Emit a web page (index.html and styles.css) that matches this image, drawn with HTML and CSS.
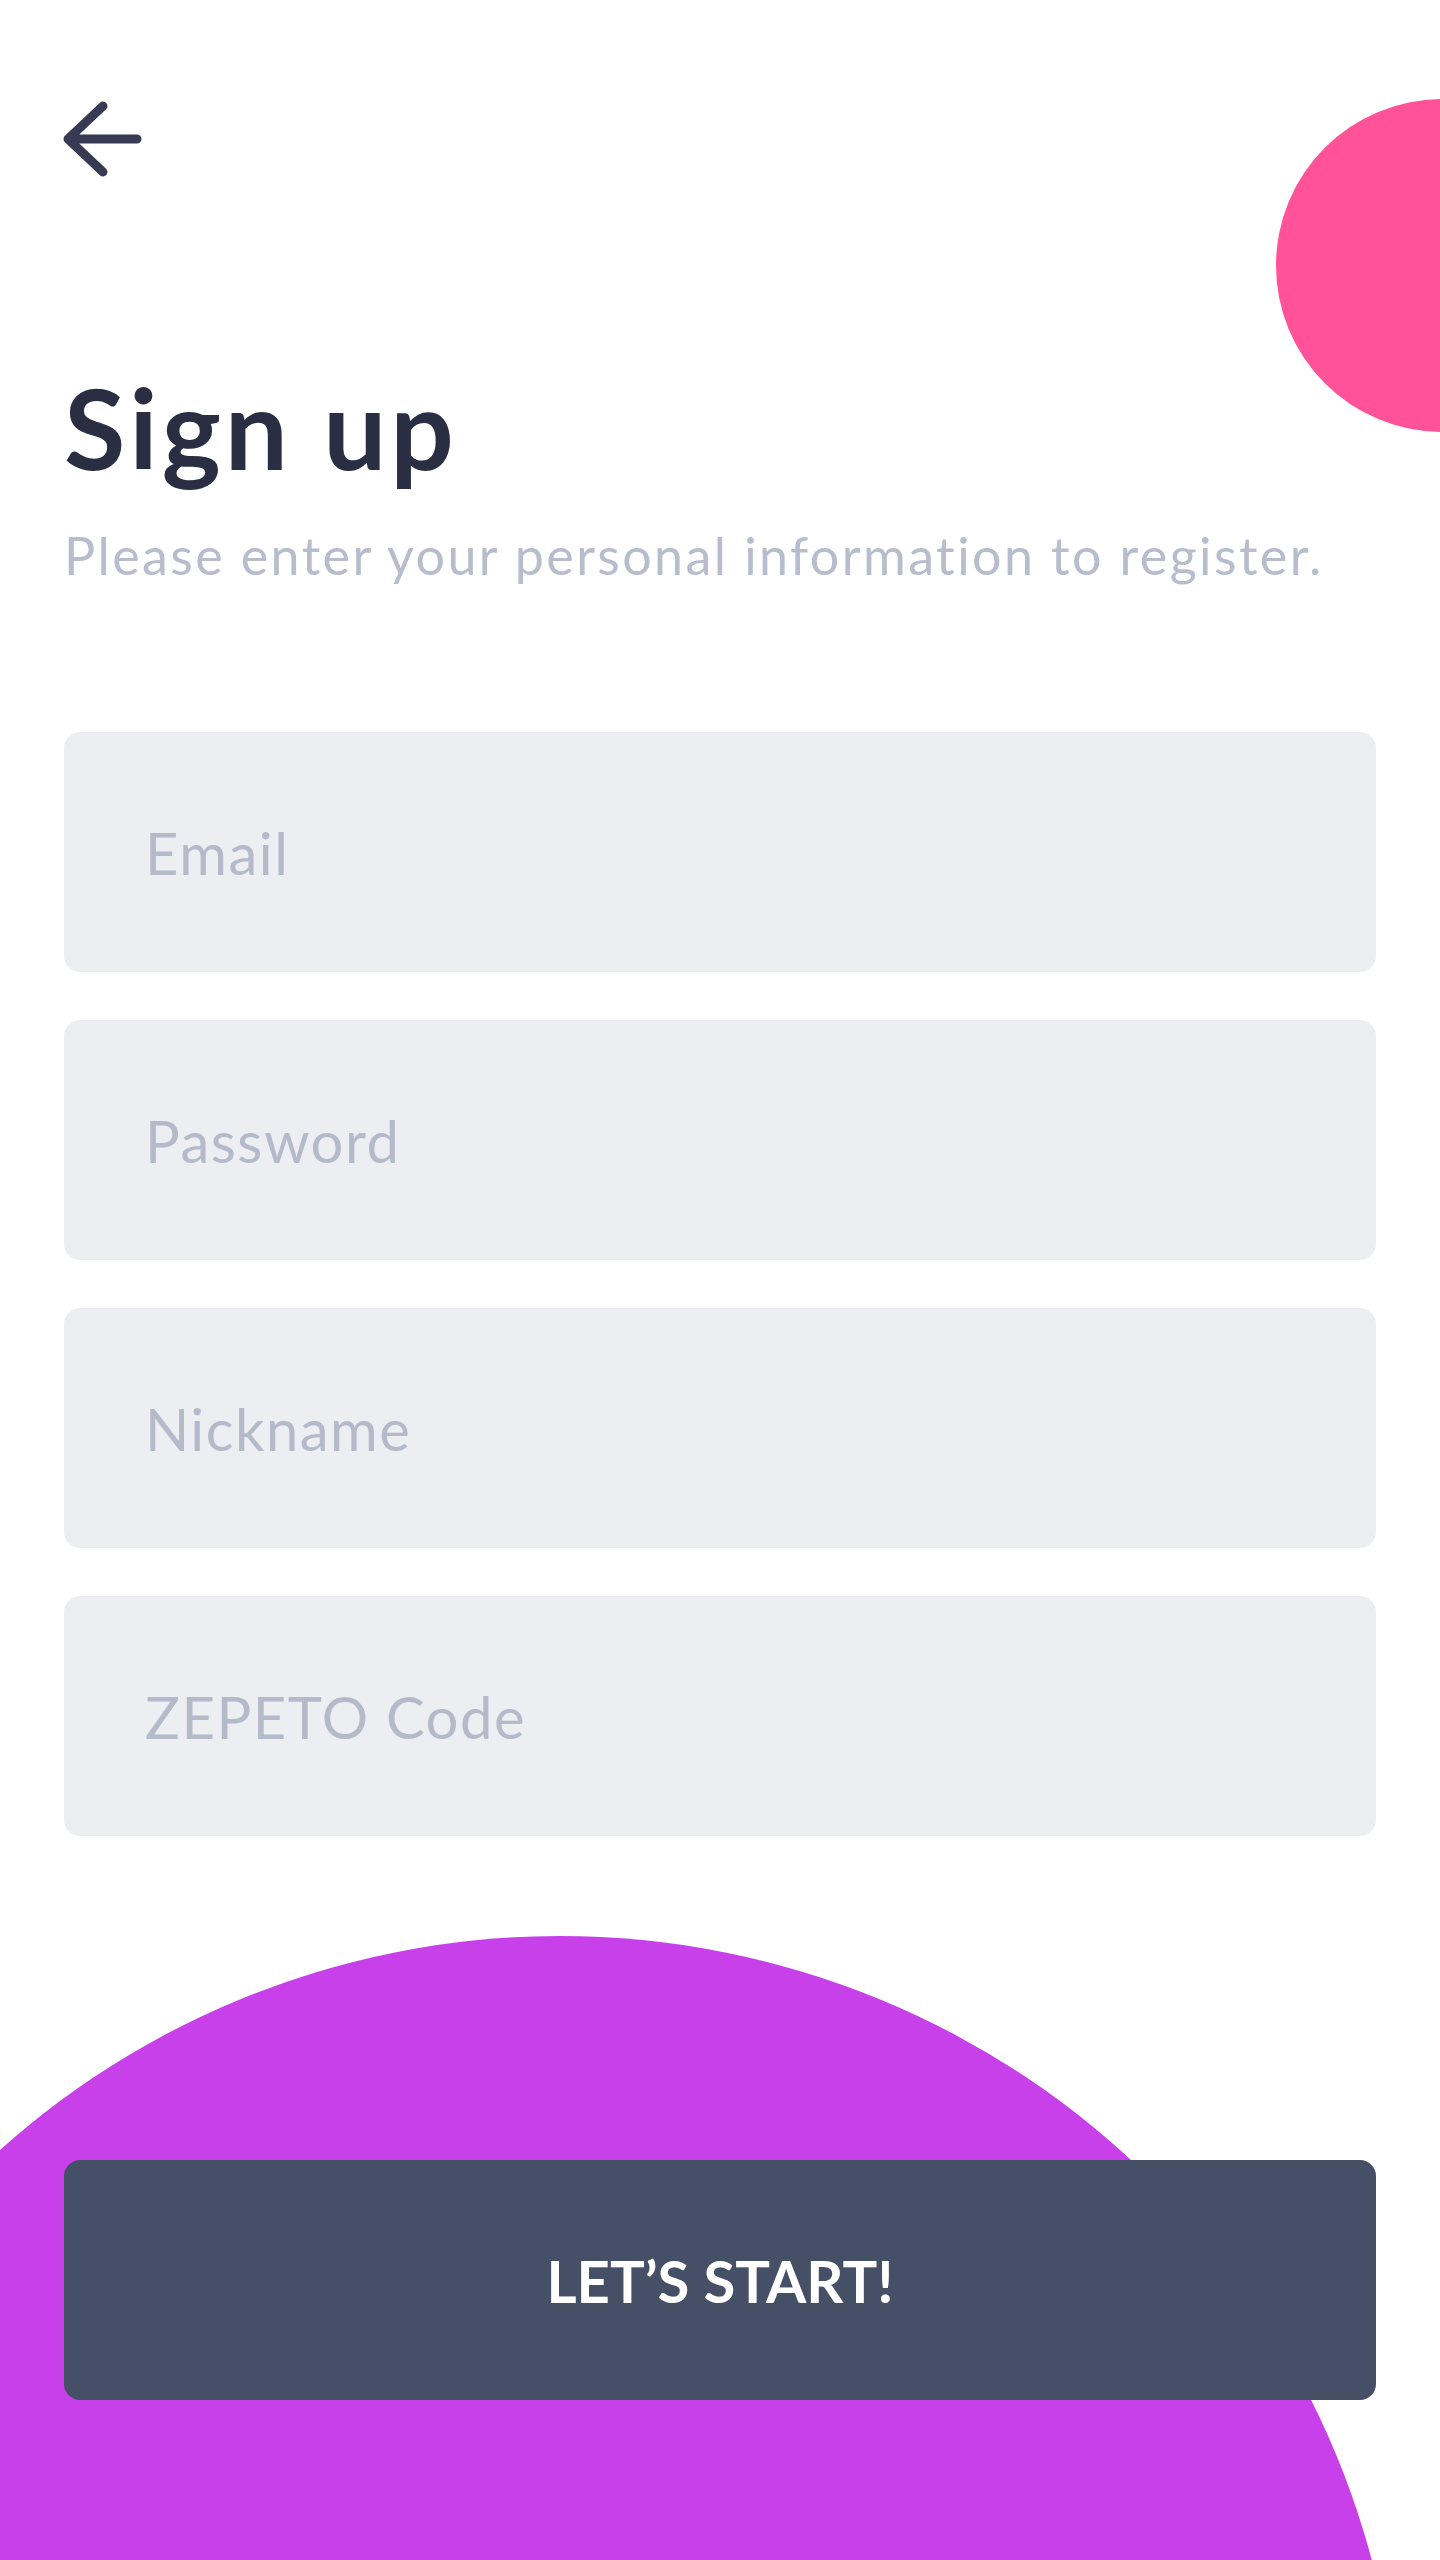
FILE: index.html
```html
<!DOCTYPE html>
<html lang="en">
<head>
<meta charset="utf-8">
<title>Sign up</title>
<link rel="stylesheet" href="styles.css">
</head>
<body>
<div class="screen">
  <div class="blob blob-pink"></div>
  <div class="blob blob-purple"></div>
  <div class="content">
    <header class="topbar">
      <svg class="back" width="84" height="80" viewBox="0 0 84 80" aria-label="Back">
        <path d="M43 7 L8 40 L43 73 M8 40 L77 40" fill="none" stroke="#363a52" stroke-width="9" stroke-linecap="round" stroke-linejoin="round"/>
      </svg>
    </header>
    <h1 class="title">Sign up</h1>
    <p class="subtitle">Please enter your personal information to register.</p>
    <form class="form">
      <div class="field"><span class="placeholder">Email</span></div>
      <div class="field"><span class="placeholder">Password</span></div>
      <div class="field"><span class="placeholder">Nickname</span></div>
      <div class="field"><span class="placeholder">ZEPETO Code</span></div>
    </form>
    <button class="cta" type="button">LET’S START!</button>
  </div>
</div>
</body>
</html>
```
FILE: styles.css
```css
html, body {
  margin: 0;
  padding: 0;
  background: #ffffff;
}

.screen {
  position: relative;
  width: 1440px;
  height: 2560px;
  overflow: hidden;
  font-family: Lato, "Liberation Sans", sans-serif;
  font-variant-ligatures: none;
}

.blob {
  position: absolute;
  border-radius: 50%;
  z-index: 0;
}

.blob-pink {
  width: 333px;
  height: 333px;
  left: 1276px;
  top: 99px;
  background: #ff5298;
}

.blob-purple {
  width: 1680px;
  height: 1680px;
  left: -280px;
  top: 1936px;
  background: #c840e9;
}

.content {
  position: relative;
  z-index: 1;
  display: flex;
  flex-direction: column;
  padding: 99px 64px 0 64px;
}

.topbar {
  height: 80px;
  display: flex;
  align-items: center;
}

.back {
  display: block;
  margin-left: -4px;
}

.title {
  margin: 192px 0 0 0;
  font-size: 112px;
  line-height: 1;
  font-weight: 700;
  color: #2a2e43;
  letter-spacing: 4px;
}

.subtitle {
  margin: 46px 0 0 0;
  font-size: 52px;
  line-height: 1;
  font-weight: 400;
  color: #b8bdce;
  letter-spacing: 2.4px;
  white-space: nowrap;
}

.form {
  margin-top: 151px;
  display: flex;
  flex-direction: column;
  gap: 48px;
}

.field {
  height: 240px;
  border-radius: 16px;
  background: #edeef2;
  display: flex;
  align-items: center;
  padding-left: 81px;
}

.placeholder {
  font-size: 58px;
  color: #b5bacb;
  font-weight: 400;
  letter-spacing: 1.5px;
}

.cta {
  margin-top: 324px;
  height: 240px;
  border: none;
  border-radius: 16px;
  background: #455066;
  color: #ffffff;
  font-family: Lato, "Liberation Sans", sans-serif;
  font-size: 58px;
  font-weight: 700;
  letter-spacing: 0;
  cursor: pointer;
}
```
